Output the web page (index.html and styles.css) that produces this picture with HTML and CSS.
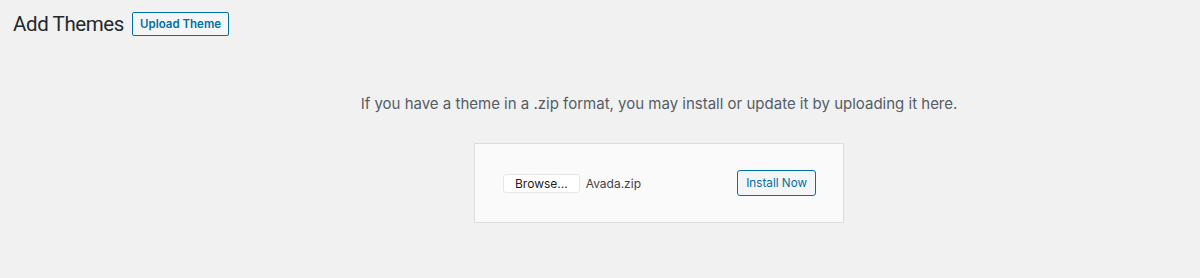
FILE: index.html
```html
<!DOCTYPE html>
<html lang="en">
<head>
    <meta charset="UTF-8">
    <meta name="viewport" content="width=device-width, initial-scale=1.0">
    <title>Add Themes</title>
    <link rel="stylesheet" href="styles.css">
</head>
<body>
    <div class="wrap">
        <div class="page-header">
            <h1>Add Themes</h1>
            <button class="page-title-action">Upload Theme</button>
        </div>

        <div class="upload-theme">
            <p class="install-help">If you have a theme in a .zip format, you may install or update it by uploading it here.</p>
            <form class="upload-form">
                <div class="file-field">
                    <span class="browse">Browse...</span>
                    <span class="file-name">Avada.zip</span>
                </div>
                <button type="button" class="install">Install Now</button>
            </form>
        </div>
    </div>
</body>
</html>
```

FILE: styles.css
```css
body {
    margin: 0;
    background-color: #f1f1f1;
    font-family: Inter, Roboto, "Noto Sans", sans-serif;
    color: #23282d;
}

.wrap {
    padding: 12px 0 0 13px;
}

.page-header {
    display: flex;
    align-items: center;
    gap: 8px;
}

.page-header h1 {
    margin: 0;
    font-family: Roboto, Inter, sans-serif;
    font-size: 20.5px;
    font-weight: 400;
    letter-spacing: -0.4px;
    line-height: 24px;
}

.page-title-action {
    height: 24px;
    padding: 0 7px;
    font-family: inherit;
    font-size: 11.5px;
    font-weight: 600;
    color: #0071a1;
    background-color: #f3f5f6;
    border: 1px solid #0071a1;
    border-radius: 2px;
}

.upload-theme {
    padding-left: 105px;
    text-align: center;
}

.install-help {
    margin: 58px 0 0;
    font-size: 15px;
    line-height: 20px;
    color: #555d66;
}

.upload-form {
    display: flex;
    justify-content: space-between;
    align-items: center;
    width: 313px;
    height: 78px;
    margin: 29px auto 0;
    padding: 0 27px 0 28px;
    background-color: #fafafa;
    border: 1px solid #dcdcde;
}

.file-field {
    display: flex;
    align-items: center;
    gap: 6px;
    font-size: 12px;
}

.browse {
    padding: 1px 11px;
    color: #222;
    background-color: #fff;
    border: 1px solid #e6e6e6;
    border-radius: 3px;
}

.file-name {
    color: #444;
}

.install {
    height: 26px;
    padding: 0 8px;
    font-family: inherit;
    font-size: 11.7px;
    color: #0071a1;
    background-color: #f3f5f6;
    border: 1px solid #0071a1;
    border-radius: 3px;
}
```
